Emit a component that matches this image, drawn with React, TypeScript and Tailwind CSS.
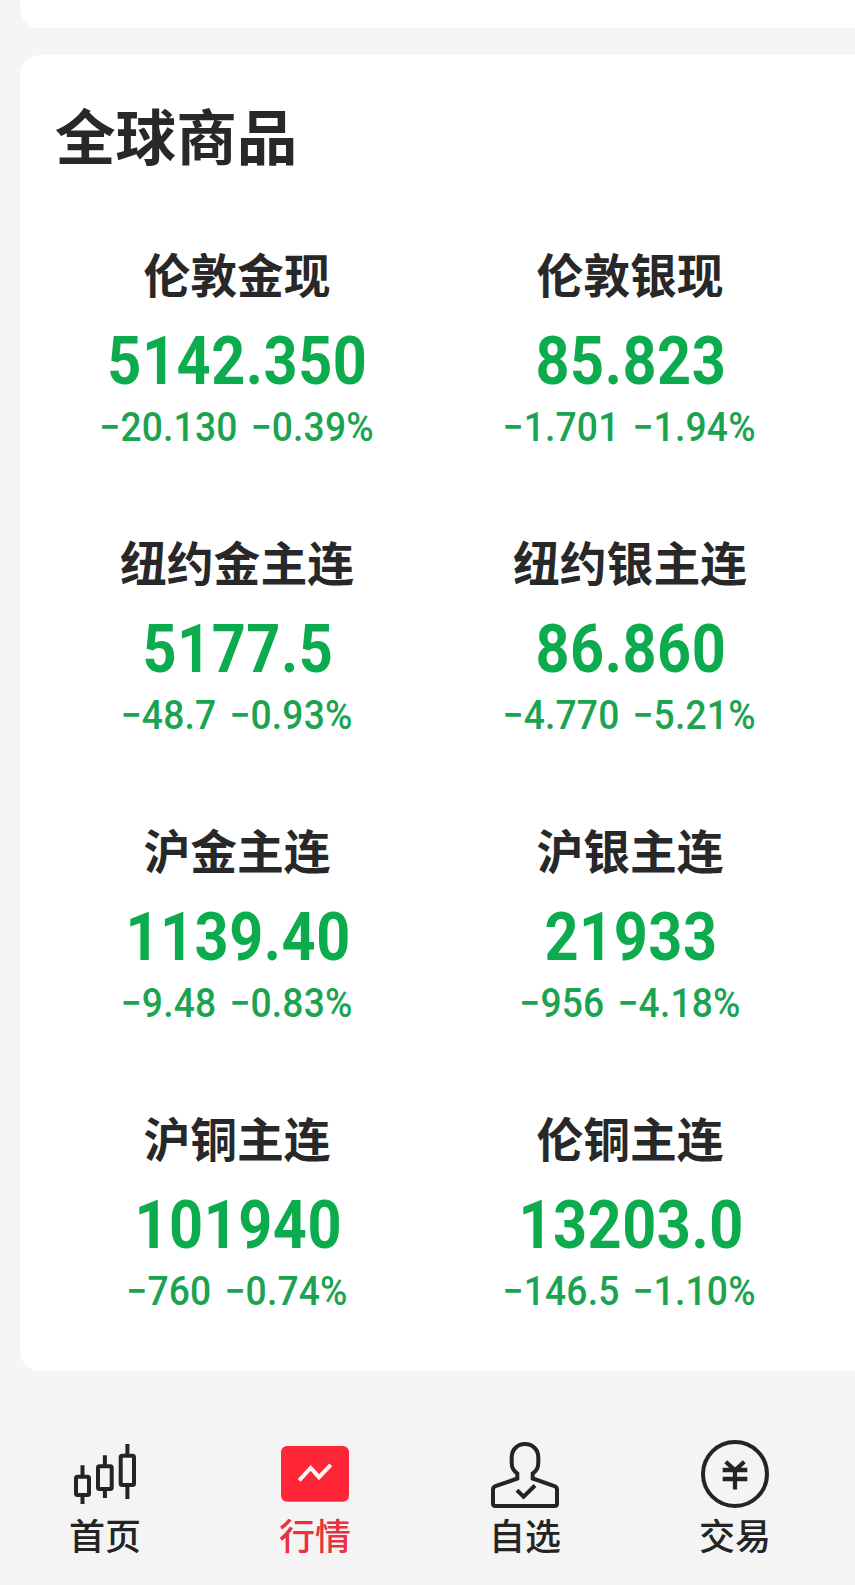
import type { ReactNode } from 'react'
import { clsx } from 'clsx'

const commodities = [
  { name: '伦敦金现', price: '5142.350', change: '−20.130', percent: '−0.39%' },
  { name: '伦敦银现', price: '85.823', change: '−1.701', percent: '−1.94%' },
  { name: '纽约金主连', price: '5177.5', change: '−48.7', percent: '−0.93%' },
  { name: '纽约银主连', price: '86.860', change: '−4.770', percent: '−5.21%' },
  { name: '沪金主连', price: '1139.40', change: '−9.48', percent: '−0.83%' },
  { name: '沪银主连', price: '21933', change: '−956', percent: '−4.18%' },
  { name: '沪铜主连', price: '101940', change: '−760', percent: '−0.74%' },
  { name: '伦铜主连', price: '13203.0', change: '−146.5', percent: '−1.10%' },
]

function Icon({ children }: { children: ReactNode }) {
  return (
    <svg className="size-[68px]" viewBox="0 0 68 68" fill="none" stroke="currentColor" strokeWidth="4">
      {children}
    </svg>
  )
}

function CandlesIcon() {
  return (
    <Icon>
      <rect x="5" y="36.7" width="13" height="18.3" rx="1.5" />
      <path d="M11.5 25.3V36M11.5 56V64" />
      <rect x="27" y="26.3" width="13.7" height="22.7" rx="1.5" />
      <path d="M33.9 15.3V25M33.9 50V58" />
      <rect x="49.7" y="15.7" width="13.3" height="29.3" rx="1.5" />
      <path d="M56.4 4V15M56.4 46V59" />
    </Icon>
  )
}

function MarketIcon() {
  return (
    <Icon>
      <rect x="0" y="6" width="68" height="55.7" rx="6" fill="#ff2638" stroke="none" />
      <path d="M18.2 40.3L29.7 28L38 37.2L49.8 24.8" stroke="#fff5f5" />
    </Icon>
  )
}

function WatchlistIcon() {
  return (
    <Icon>
      <path
        d="M26.3 38.5V33.5C22.6 31 20.7 27.5 20.7 23V17.5C20.7 9.5 26.5 4 34 4S47.3 9.5 47.3 17.5V23C47.3 27.5 45.4 31 41.7 33.5V38.5L63.5 46.2Q66 47.2 66 49.5V63.5Q66 66 63.5 66H4.5Q2 66 2 63.5V49.5Q2 47.2 4.5 46.2Z"
      />
      <path d="M26 50.3L32.6 56.7L44 45.5" />
    </Icon>
  )
}

function TradeIcon() {
  return (
    <Icon>
      <circle cx="34" cy="34" r="32" />
      <path d="M24.7 21.7L34 30.3L43.3 21.7M34 29V49.5" strokeWidth="4.2" />
      <path d="M21.7 30H46.3M21.7 39H46.3" strokeWidth="4.4" />
    </Icon>
  )
}

const tabs = [
  { label: '首页', icon: <CandlesIcon /> },
  { label: '行情', icon: <MarketIcon />, active: true },
  { label: '自选', icon: <WatchlistIcon /> },
  { label: '交易', icon: <TradeIcon /> },
]

export default function App() {
  return (
    <div className="flex h-[1585px] w-[855px] flex-col overflow-hidden bg-[#f5f5f5] font-['Noto_Sans_CJK_SC',sans-serif] text-[#282828]">
      <div className="ml-5 h-7 shrink-0 rounded-bl-[20px] bg-white" />

      <section className="mt-[27px] ml-5 h-[1316px] shrink-0 rounded-l-[20px] bg-white">
        <h2 className="pt-[39px] pl-[35px] text-[60.6px] leading-[80px] font-bold">全球商品</h2>
        <div className="mt-[69px] grid auto-rows-[288px] grid-cols-[393px_393px] pl-5">
          {commodities.map((item) => (
            <div key={item.name} className="flex flex-col items-center whitespace-nowrap">
              <h3 className="pl-px text-[46.8px] leading-[60px] font-bold">{item.name}</h3>
              <p className="mt-[26px] scale-x-90 pl-[3px] font-[Roboto,sans-serif] text-[66px] leading-[66px] font-bold tracking-[0.6px] text-[#0cab4e]">
                {item.price}
              </p>
              <p className="mt-[10px] flex scale-x-93 gap-[14px] font-[Roboto,sans-serif] text-[40px] leading-[46px] font-medium tracking-[0.2px] text-[#1ba352]">
                <span>{item.change}</span>
                <span>{item.percent}</span>
              </p>
            </div>
          ))}
        </div>
      </section>

      <nav className="mt-[41px] grid flex-1 grid-cols-[repeat(4,210px)] bg-[#f4f4f4] pt-7">
        {tabs.map((tab) => (
          <div
            key={tab.label}
            className={clsx('flex flex-col items-center', tab.active ? 'text-[#e8323f]' : 'text-[#242424]')}
          >
            {tab.icon}
            <span className="mt-[2px] text-[36px] leading-[48px] font-medium">{tab.label}</span>
          </div>
        ))}
      </nav>
    </div>
  )
}
